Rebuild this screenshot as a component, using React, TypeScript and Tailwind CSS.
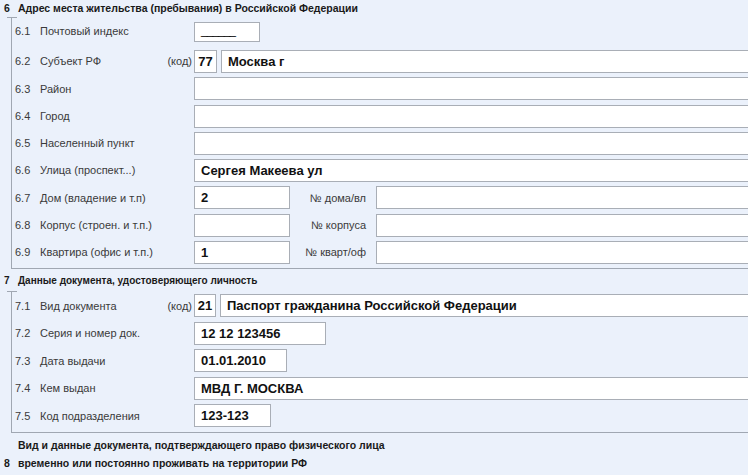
import React from 'react';

const font = "font-['Liberation_Sans',Arial,sans-serif]";

function Box({ w, h = 'h-[23px]', children, center }: { w?: string; h?: string; children?: React.ReactNode; center?: boolean }) {
  return (
    <div
      className={`${w ?? 'flex-1'} ${h} shrink-0 border border-[#a9aeb6] bg-white flex items-center ${center ? 'justify-center' : 'px-[6px]'} text-[13px] font-bold text-[#111] whitespace-nowrap overflow-hidden`}
    >
      {children}
    </div>
  );
}

function Row({
  num,
  label,
  kod,
  h = 'h-[27.25px]',
  extra,
  children,
}: {
  num: string;
  label: string;
  kod?: boolean;
  h?: string;
  extra?: string;
  children: React.ReactNode;
}) {
  return (
    <div className={`flex items-center ${h} ${extra ?? ''}`}>
      <span className="w-[28px] pl-[3px] shrink-0">{num}</span>
      <span className="w-[154px] shrink-0 flex items-center justify-between pr-[2px]">
        <span>{label}</span>
        {kod && <span>(код)</span>}
      </span>
      <div className="flex-1 flex items-center">{children}</div>
    </div>
  );
}

function SideLabel({ text }: { text: string }) {
  return <span className="w-[86px] shrink-0 text-right pr-[10px]">{text}</span>;
}

export default function App() {
  return (
    <div className={`w-[748px] h-[475px] overflow-hidden bg-[#ebf1fb] ${font} text-[11px] text-[#3a3a3a]`}>
      <div className="w-[760px]">
        {/* Раздел 6 */}
        <div className="flex items-center h-[17px] font-bold text-[10.5px] text-[#1a1a1a]">
          <span className="w-[18px] pl-[4px]">6</span>
          <span>Адрес места жительства (пребывания) в Российской Федерации</span>
        </div>
        <div className="ml-[7px] w-[10px] border-t border-[#a0a7b2]" />
        <div className="ml-[11px] border-l border-b border-[#a0a7b2] pb-[2px]">
          <Row num="6.1" label="Почтовый индекс" h="h-[30px]" extra="pb-[3px]">
            <Box w="w-[66px]" h="h-[20px]">
              <span className="font-normal text-[12px] -mt-[4px] tracking-[-1px]">______</span>
            </Box>
          </Row>
          <Row num="6.2" label="Субъект РФ" kod>
            <Box w="w-[23px]" center>77</Box>
            <div className="w-[4px]" />
            <Box>Москва г</Box>
          </Row>
          <Row num="6.3" label="Район">
            <Box />
          </Row>
          <Row num="6.4" label="Город">
            <Box />
          </Row>
          <Row num="6.5" label="Населенный пункт">
            <Box />
          </Row>
          <Row num="6.6" label="Улица (проспект...)">
            <Box>Сергея Макеева ул</Box>
          </Row>
          <Row num="6.7" label="Дом (владение и т.п)">
            <Box w="w-[96px]">2</Box>
            <SideLabel text="№ дома/вл" />
            <Box />
          </Row>
          <Row num="6.8" label="Корпус (строен. и т.п.)">
            <Box w="w-[96px]" />
            <SideLabel text="№ корпуса" />
            <Box />
          </Row>
          <Row num="6.9" label="Квартира (офис и т.п.)">
            <Box w="w-[96px]">1</Box>
            <SideLabel text="№ кварт/оф" />
            <Box />
          </Row>
        </div>

        {/* Раздел 7 */}
        <div className="flex items-center h-[22px] font-bold text-[10px] text-[#1a1a1a]">
          <span className="w-[18px] pl-[4px]">7</span>
          <span>Данные документа, удостоверяющего личность</span>
        </div>
        <div className="ml-[7px] w-[10px] border-t border-[#a0a7b2]" />
        <div className="ml-[11px] border-l border-b border-[#a0a7b2] pb-[2px]">
          <Row num="7.1" label="Вид документа" kod h="h-[27.5px]">
            <Box w="w-[22px]" center>21</Box>
            <div className="w-[4px]" />
            <Box>Паспорт гражданина Российской Федерации</Box>
          </Row>
          <Row num="7.2" label="Серия и номер док." h="h-[27.5px]">
            <Box w="w-[132px]">12 12 123456</Box>
          </Row>
          <Row num="7.3" label="Дата выдачи" h="h-[27.5px]">
            <Box w="w-[93px]">01.01.2010</Box>
          </Row>
          <Row num="7.4" label="Кем выдан" h="h-[27.5px]">
            <Box>МВД Г. МОСКВА</Box>
          </Row>
          <Row num="7.5" label="Код подразделения" h="h-[27.5px]">
            <Box w="w-[77px]">123-123</Box>
          </Row>
        </div>

        {/* Раздел 8 */}
        <div className="flex pt-[3px] font-bold text-[10.5px] text-[#1a1a1a] leading-[18px]">
          <span className="w-[18px] pl-[4px] self-end">8</span>
          <div>
            <div>Вид и данные документа, подтверждающего право физического лица</div>
            <div>временно или постоянно проживать на территории РФ</div>
          </div>
        </div>
      </div>
    </div>
  );
}
